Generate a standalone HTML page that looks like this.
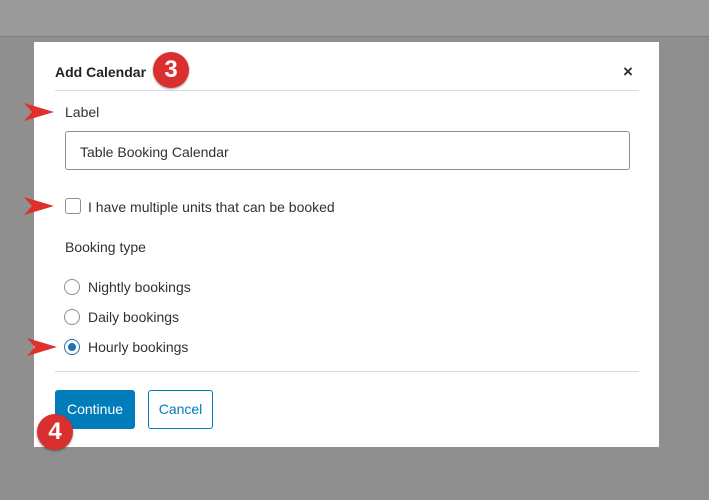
<html><head><style>
body{margin:0;width:709px;height:500px;background:#8f8f8f;position:relative;overflow:hidden;font-family:"Liberation Sans",sans-serif;color:#2c3338}
.top{position:absolute;left:0;top:0;width:709px;height:36px;background:#9a9a9a;border-bottom:1px solid #7d7d7d}
.modal{position:absolute;left:34px;top:42px;width:625px;height:405px;background:#fff}
.t{position:absolute;font-size:14px}
.badge{position:absolute;width:36px;height:36px;border-radius:50%;background:#d9302f;color:#fff;font-size:24px;font-weight:bold;text-align:center;line-height:36px;box-shadow:0 1px 2px rgba(0,0,0,.4)}
.radio{position:absolute;width:14px;height:14px;border:1px solid #8c8f94;border-radius:50%;background:#fff}
.arrow{position:absolute}
</style></head><body>
<div class="top"></div>
<div class="modal">
<div class="t" style="left:21px;top:22px;font-weight:bold;color:#1d2327">Add Calendar</div>
<div class="t" style="left:589px;top:20px;font-size:17px;font-weight:bold">×</div>
<div style="position:absolute;left:21px;top:48px;width:584px;height:1px;background:#dcdcde"></div>
<div class="t" style="left:31px;top:62px">Label</div>
<div style="position:absolute;left:31px;top:89px;width:563px;height:37px;border:1px solid #8c8f94;border-radius:3px"></div>
<div class="t" style="left:46px;top:102px">Table Booking Calendar</div>
<div style="position:absolute;left:31px;top:156px;width:14px;height:14px;border:1px solid #8c8f94;border-radius:3px"></div>
<div class="t" style="left:54px;top:157px">I have multiple units that can be booked</div>
<div class="t" style="left:31px;top:197px">Booking type</div>
<div class="radio" style="left:30px;top:237px"></div><div class="t" style="left:54px;top:237px">Nightly bookings</div>
<div class="radio" style="left:30px;top:267px"></div><div class="t" style="left:54px;top:267px">Daily bookings</div>
<div class="radio" style="left:30px;top:297px;border-color:#2271b1"><div style="position:absolute;left:3px;top:3px;width:8px;height:8px;border-radius:50%;background:#2271b1"></div></div><div class="t" style="left:54px;top:297px">Hourly bookings</div>
<div style="position:absolute;left:21px;top:329px;width:584px;height:1px;background:#dcdcde"></div>
<div style="position:absolute;left:21px;top:348px;width:80px;height:39px;background:#007cba;border-radius:3px;color:#fff;font-size:14px;text-align:center;line-height:39px">Continue</div>
<div style="position:absolute;left:114px;top:348px;width:63px;height:37px;border:1px solid #007cba;border-radius:3px;color:#007cba;font-size:14px;text-align:center;line-height:37px">Cancel</div>
</div>
<div class="badge" style="left:153px;top:52px">3</div>
<div class="badge" style="left:37px;top:414px">4</div>
<svg class="arrow" style="left:0;top:0" width="709" height="500">
<g fill="#e0302e">
<path d="M24 121 L54 112 L24 103 L32 112 Z"/>
<path d="M24 215 L54 206 L24 197 L32 206 Z"/>
<path d="M27 356 L57 347 L27 338 L35 347 Z"/>
</g></svg>
</body></html>
